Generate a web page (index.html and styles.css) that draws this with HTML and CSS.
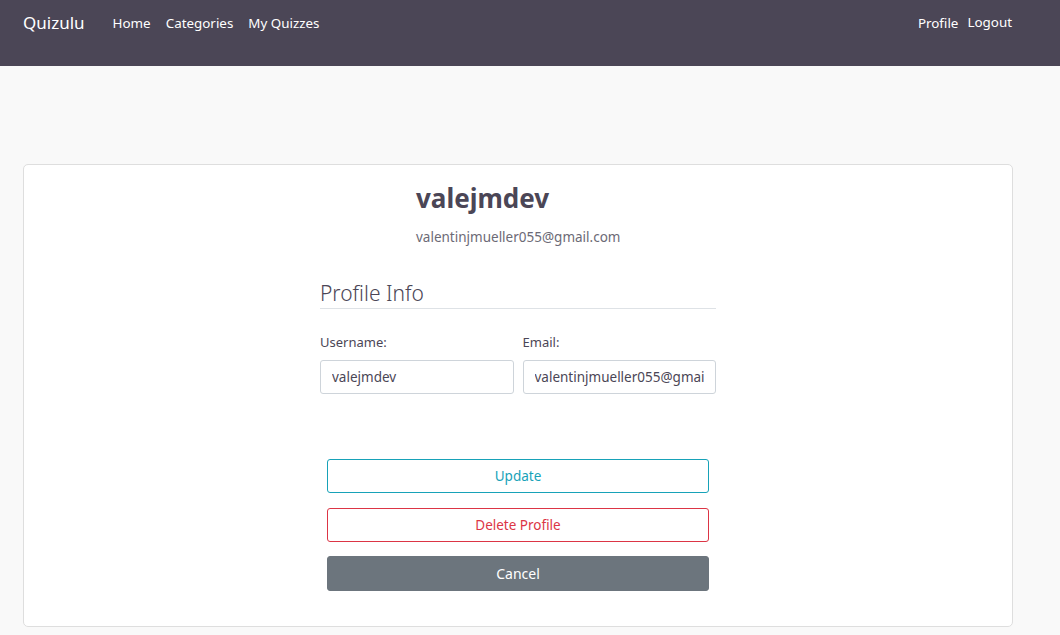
FILE: index.html
```html
<!DOCTYPE html>
<html lang="en">
<head>
<meta charset="utf-8">
<title>Quizulu - Profile</title>
<link rel="stylesheet" href="styles.css">
</head>
<body>
<nav class="navbar">
  <a class="brand" href="#">Quizulu</a>
  <ul class="nav-links">
    <li><a href="#">Home</a></li>
    <li><a href="#">Categories</a></li>
    <li><a href="#">My Quizzes</a></li>
  </ul>
  <ul class="nav-right">
    <li><a href="#">Profile</a></li>
    <li><a href="#" class="logout">Logout</a></li>
  </ul>
</nav>
<main class="page">
  <section class="card">
    <div class="col">
      <div class="identity">
        <h1 class="username">valejmdev</h1>
        <p class="email">valentinjmueller055@gmail.com</p>
      </div>
      <h2 class="section-title">Profile Info</h2>
      <form class="form">
        <div class="fields">
          <div class="field">
            <label>Username:</label>
            <input type="text" value="valejmdev">
          </div>
          <div class="field">
            <label>Email:</label>
            <input type="text" value="valentinjmueller055@gmail.com">
          </div>
        </div>
        <div class="actions">
          <button type="button" class="btn btn-info">Update</button>
          <button type="button" class="btn btn-danger">Delete Profile</button>
          <button type="button" class="btn btn-secondary">Cancel</button>
        </div>
      </form>
    </div>
  </section>
</main>
</body>
</html>
```
FILE: styles.css
```css
* { box-sizing: border-box; }
html, body { margin: 0; padding: 0; }
body {
  background: #f9f9f9;
  font-family: "Noto Sans", "Open Sans", sans-serif;
  color: #4b4656;
  font-size: 14px;
}
a { text-decoration: none; color: inherit; }
ul { list-style: none; margin: 0; padding: 0; }

.navbar {
  height: 66px;
  background: #4b4656;
  display: flex;
  align-items: flex-start;
  padding: 11px 48px 0 23px;
  color: #fff;
}
.brand {
  font-size: 17px;
  line-height: 24px;
  margin-right: 28px;
}
.nav-links, .nav-right {
  display: flex;
  gap: 15px;
  font-size: 13.4px;
  line-height: 24px;
}
.nav-right { margin-left: auto; gap: 9px; }
.logout { position: relative; top: -1px; }

.page { padding: 98px 47px 0 23px; }
.card {
  background: #fff;
  border: 1px solid #dedede;
  border-radius: 5px;
  height: 463px;
  display: flex;
  justify-content: center;
}
.col { width: 396px; }
.identity { margin-left: 96px; padding-top: 16px; }
.username {
  margin: 0;
  font-size: 26px;
  font-weight: 700;
  line-height: 34px;
  color: #4b4656;
}
.email {
  margin: 13px 0 0 0;
  font-size: 13.5px;
  line-height: 18px;
  color: #6c6a76;
}
.section-title {
  margin: 33px 0 0 0;
  font-size: 21px;
  font-weight: 300;
  line-height: 28px;
  padding-bottom: 1px;
  border-bottom: 1px solid #dee2e6;
  color: #4b4656;
}
.fields {
  display: flex;
  gap: 9px;
  margin-top: 24px;
}
.field { flex: 1; display: flex; flex-direction: column; }
.field label {
  font-size: 13px;
  line-height: 18px;
  margin-bottom: 9px;
  color: #4b4656;
}
.field input {
  width: 100%;
  height: 34px;
  border: 1px solid #ced4da;
  border-radius: 3px;
  padding: 0 11px;
  font-family: inherit;
  font-size: 13.5px;
  color: #4b4656;
  background: #fff;
}
.actions {
  display: flex;
  flex-direction: column;
  gap: 15px;
  margin: 65px 7px 0 7px;
}
.btn {
  height: 34px;
  border-radius: 3px;
  font-family: inherit;
  font-size: 13.5px;
  background: #fff;
  border: 1px solid;
}
.btn-info { color: #17a2b8; border-color: #17a2b8; }
.btn-danger { color: #dc3545; border-color: #dc3545; }
.btn-secondary {
  background: #6c757d;
  border-color: #6c757d;
  color: #fff;
  height: 35px;
  font-size: 14px;
  margin-top: -1px;
}
```
